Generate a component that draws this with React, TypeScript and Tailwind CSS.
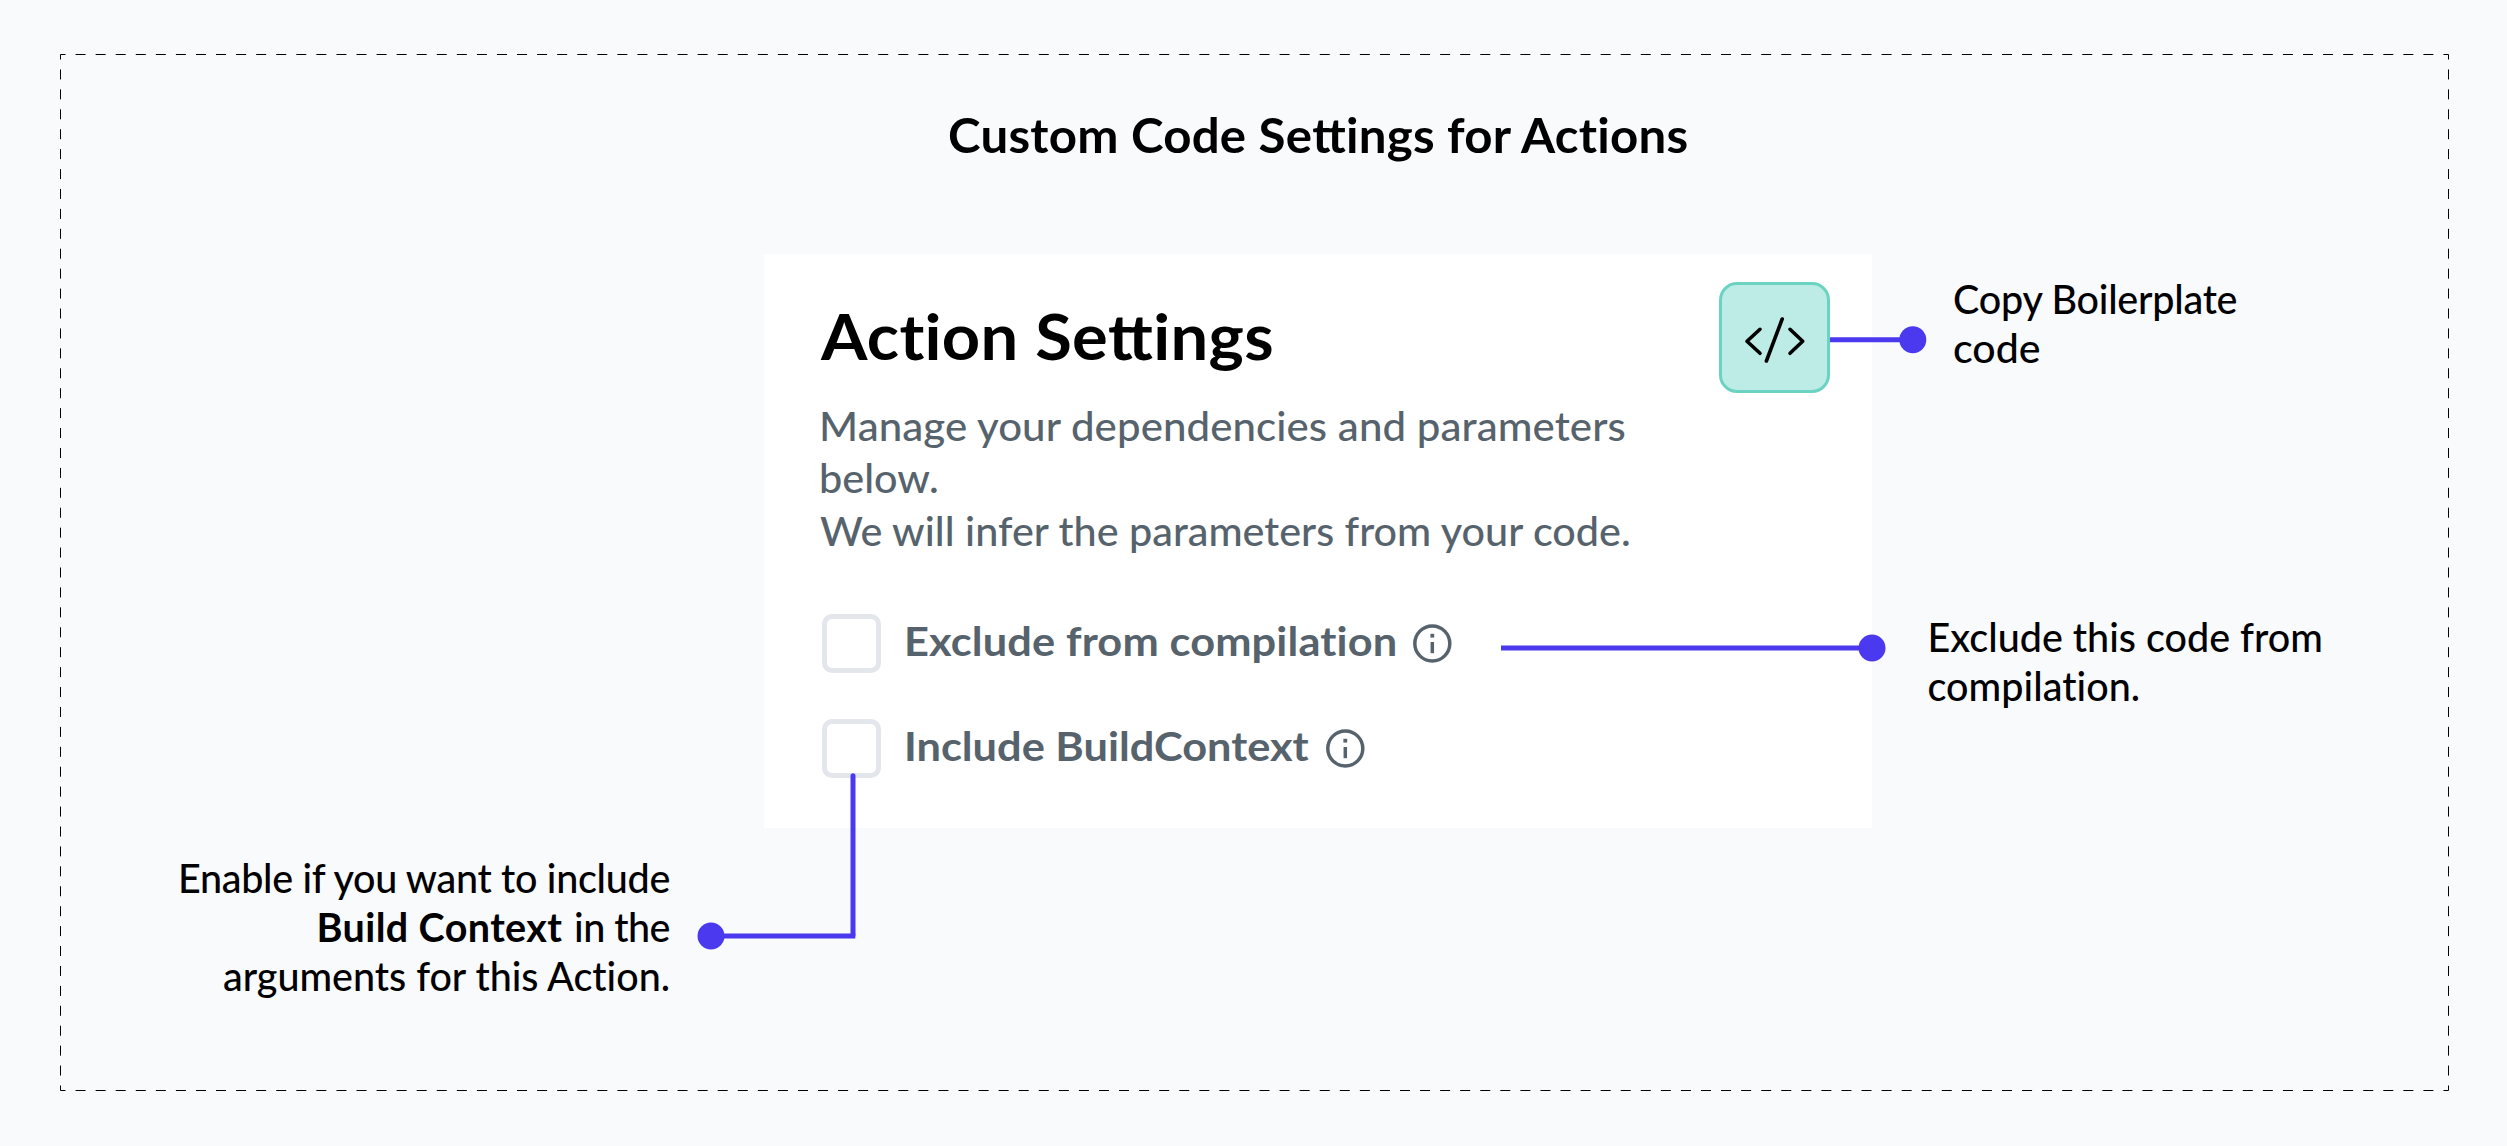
import type { ReactNode } from 'react';

function DashedFrame() {
  return (
    <svg className="pointer-events-none absolute left-[60px] top-[54px]" width="2389" height="1037" viewBox="0 0 2389 1037" fill="none" stroke="#000" strokeWidth="1">
      <path d="M0.5 0.5H2388.5M0.5 1036.5H2388.5" strokeDasharray="10 10.067" strokeDashoffset="5" />
      <path d="M0.5 0.5V1036.5M2388.5 0.5V1036.5" strokeDasharray="10 9.923" strokeDashoffset="5" />
    </svg>
  );
}

function CodeIcon() {
  return (
    <svg className="shrink-0" width="111" height="111" viewBox="0 0 111 111" fill="none" stroke="#000" strokeWidth="3.6" strokeLinecap="round" strokeLinejoin="round">
      <path d="M41 47.3L28 59.3L41 71.3" />
      <path d="M71 47.3L83.7 59.3L71 71.3" />
      <path d="M63.2 37L47.4 79" />
    </svg>
  );
}

function InfoIcon() {
  return (
    <svg className="shrink-0" width="39" height="39" viewBox="0 0 39 39" fill="none" stroke="#57636c" strokeWidth="3.5">
      <circle cx="19.3" cy="19.5" r="17.5" />
      <path d="M19.3 18V29.2" />
      <path d="M19.3 9.8V13.6" strokeWidth="3.8" />
    </svg>
  );
}

function Option({ children, width }: { children: ReactNode; width: string }) {
  return (
    <div className="flex h-[59px] items-center">
      <div className="size-[59px] shrink-0 rounded-[10px] border-5 border-[#e3e7eb] bg-white" />
      <div className={`ml-[22.5px] h-[59px] shrink-0 whitespace-nowrap pt-px text-[40.5px] font-bold leading-[52px] text-[#57636c] ${width}`}>
        <div className="w-max origin-left scale-x-[1.07]">{children}</div>
      </div>
      <InfoIcon />
    </div>
  );
}

function Connectors() {
  return (
    <svg className="pointer-events-none absolute left-0 top-0 overflow-visible" width="1108" height="574" viewBox="0 0 1108 574" fill="none" stroke="#4b39ef" strokeWidth="5">
      <path d="M1066 85.8H1149" />
      <circle cx="1148.8" cy="85.8" r="13.5" fill="#4b39ef" stroke="none" />
      <path d="M737 394H1108" />
      <circle cx="1108" cy="394" r="13.5" fill="#4b39ef" stroke="none" />
      <path d="M-53 682H91.3" />
      <path d="M89 521.8V681" strokeLinecap="round" />
      <circle cx="-53" cy="682" r="13.5" fill="#4b39ef" stroke="none" />
    </svg>
  );
}

export default function App() {
  return (
    <main className="relative h-[1146px] w-[2507px] overflow-hidden bg-[#f9fafc] pt-[105px] font-['Lato',sans-serif] font-medium text-black [font-variant-ligatures:none]">
      <DashedFrame />
      <h1 className="ml-[948px] h-[149px] w-max origin-left scale-x-[1.036] text-[47.5px] font-bold leading-[60px] tracking-[0.24px]">
        Custom Code Se<span className="tracking-[-3.1px]">t</span>tings for Actions
      </h1>

      <div className="flex items-start">
        <div className="flex w-[764px] flex-col items-end whitespace-nowrap pr-[94px] pt-[600.4px] text-right text-[39.5px] leading-[48.7px]">
          <div className="tracking-[-0.3px]">Enable if you want to include</div>
          <div className="tracking-[-0.519px]">
            <b className="mr-[2.3px] font-bold tracking-[0.38px]">Build Context</b> in the
          </div>
          <div className="tracking-[-0.03px]">arguments for this Action.</div>
        </div>

        <section className="relative h-[574px] w-[1108px] shrink-0 bg-white pl-[55px]">
          <h2 className="ml-[1.5px] w-max origin-left scale-x-[1.053] pt-[44px] text-[63.5px] font-bold leading-[76px] tracking-[0.29px]">
            Action Se<span className="tracking-[-4.6px]">t</span>tings
          </h2>
          <div className="mt-[26px] whitespace-nowrap text-[40px] leading-[52.25px] text-[#57636c]">
            <div className="w-max origin-left scale-x-[1.05] tracking-[0.07px]">Manage your dependencies and parameters</div>
            <div className="w-max origin-left scale-x-[1.035]">below.</div>
            <div className="ml-px w-max origin-left scale-x-[1.033] tracking-[0.02px]">We will infer the parameters from your code.</div>
          </div>
          <div className="ml-[3px] mt-[57.5px] flex flex-col gap-[45.5px]">
            <Option width="w-[509.5px] tracking-[0.13px]">Exclude from compilation</Option>
            <Option width="w-[422.7px]">Include BuildContext</Option>
          </div>
          <button className="absolute right-[42px] top-[28px] flex size-[111px] items-center justify-center rounded-[18px] border-[3px] border-[#6bd3c2] bg-[#bdebe5]">
            <CodeIcon />
          </button>
          <Connectors />
        </section>

        <aside className="whitespace-nowrap pt-[20px] text-[39.5px] leading-[49.3px]">
          <div className="h-[338px] pl-[81px]">
            <div className="tracking-[-0.238px]">Copy Boilerplate</div>
            <div className="w-max origin-left scale-x-[1.04]">code</div>
          </div>
          <div className="pl-[55.5px]">
            <div>Exclude this code from</div>
            <div className="tracking-[0.037px]">compilation.</div>
          </div>
        </aside>
      </div>
    </main>
  );
}
